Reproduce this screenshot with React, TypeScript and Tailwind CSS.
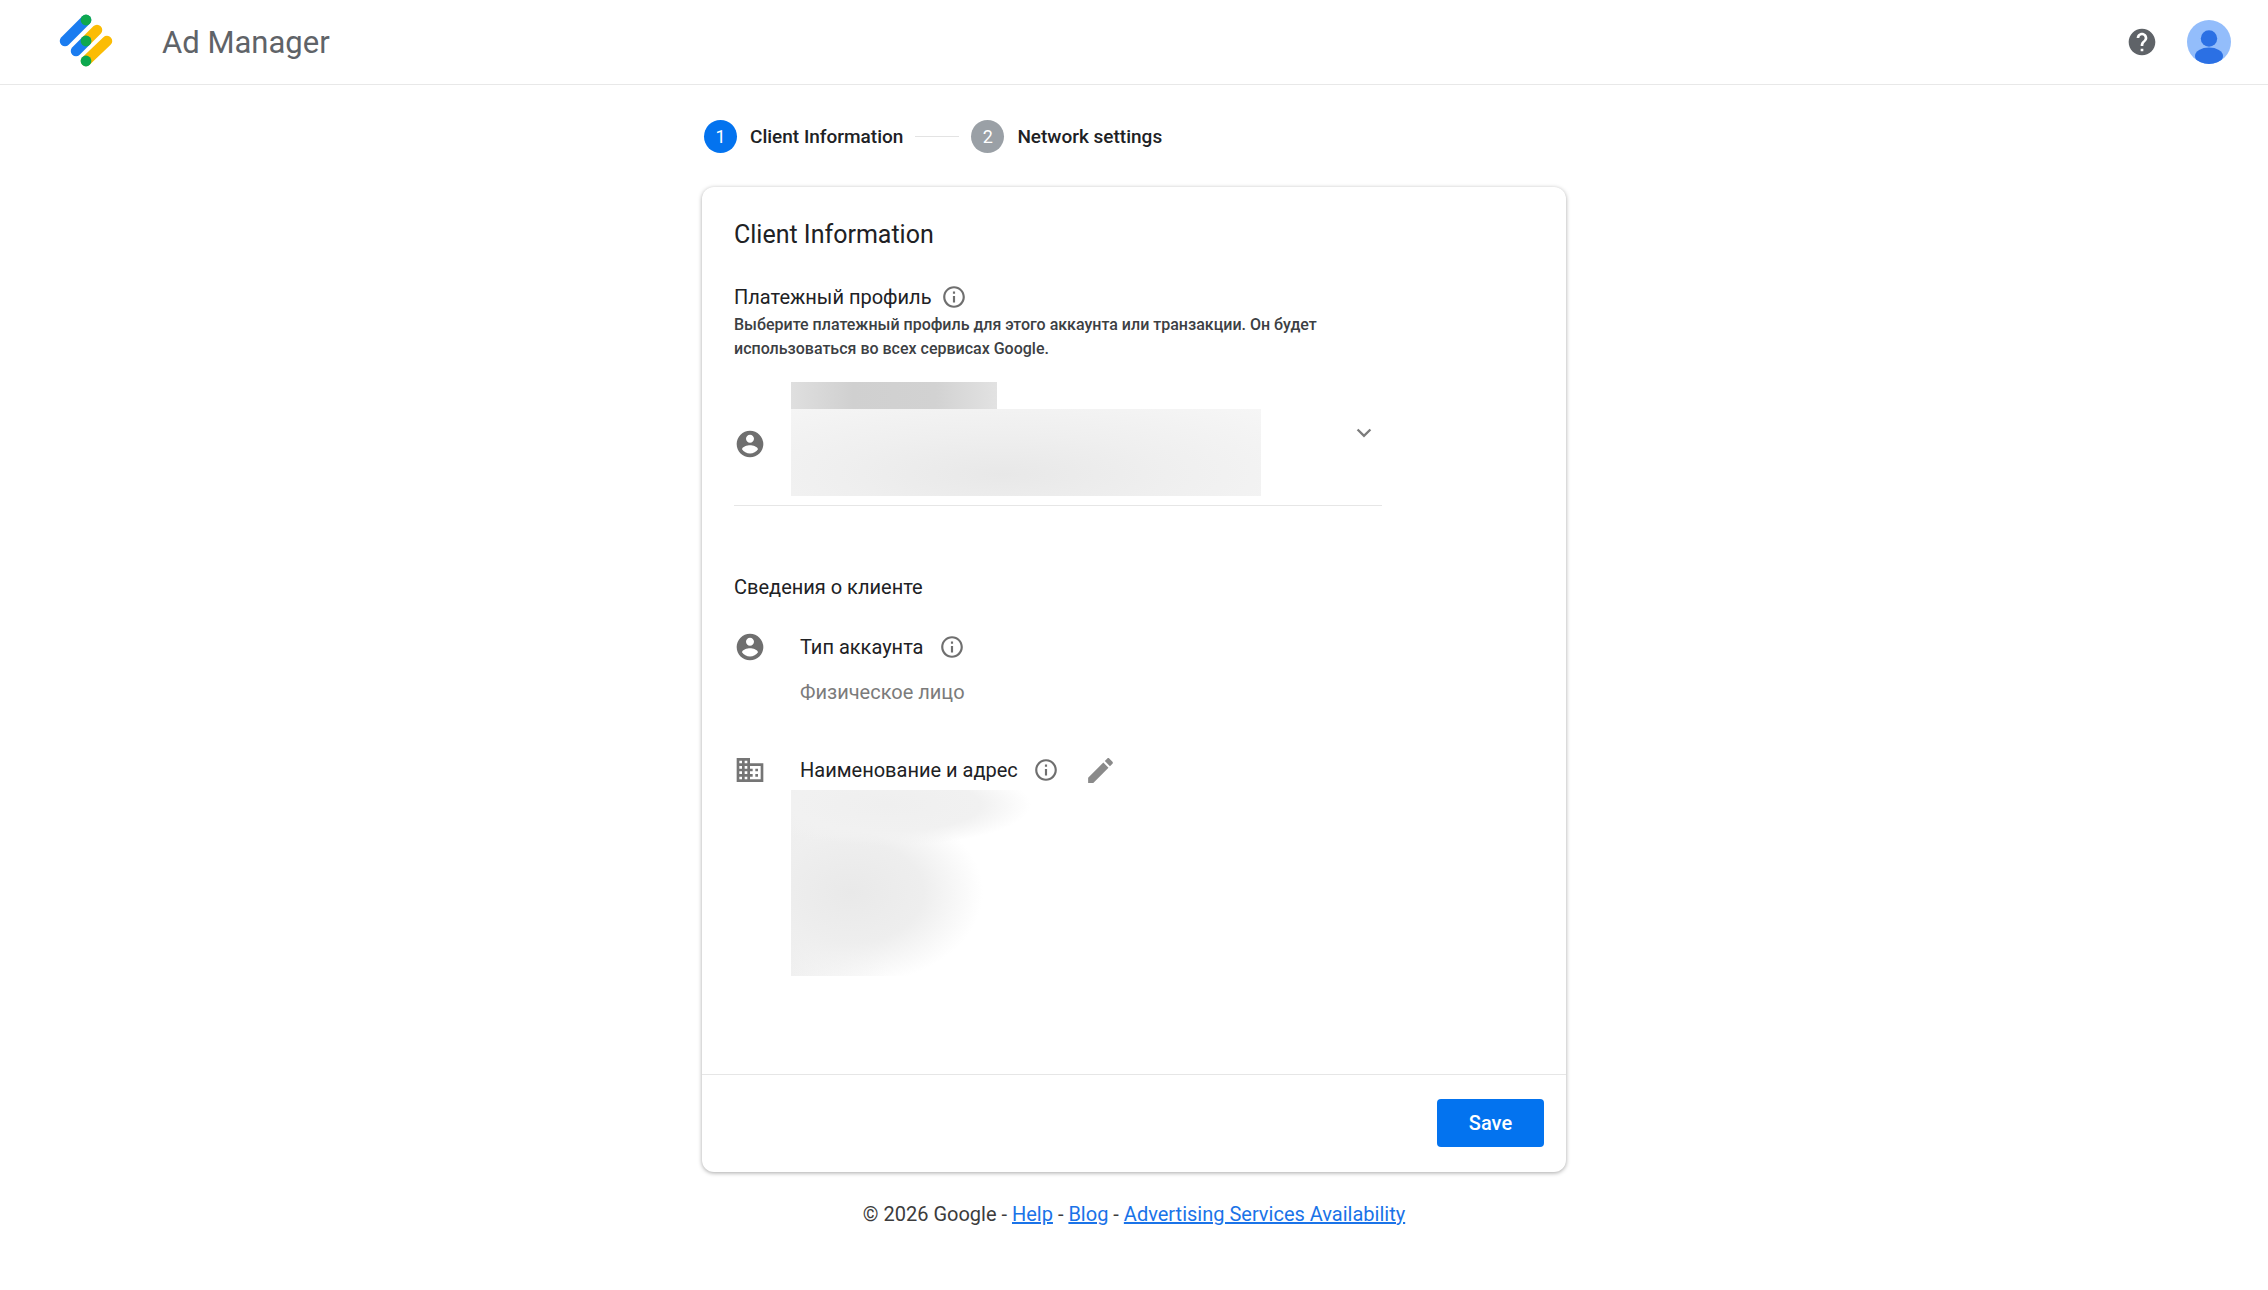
import React from 'react';

const ACCOUNT =
  'M12 2C6.48 2 2 6.48 2 12s4.48 10 10 10 10-4.48 10-10S17.52 2 12 2zm0 3c1.66 0 3 1.34 3 3s-1.34 3-3 3-3-1.34-3-3 1.34-3 3-3zm0 14.2c-2.5 0-4.71-1.28-6-3.22.03-1.99 4-3.08 6-3.08 1.99 0 5.97 1.09 6 3.08-1.29 1.94-3.5 3.22-6 3.22z';
const DOMAIN =
  'M12 7V3H2v18h20V7H12zM6 19H4v-2h2v2zm0-4H4v-2h2v2zm0-4H4V9h2v2zm0-4H4V5h2v2zm4 12H8v-2h2v2zm0-4H8v-2h2v2zm0-4H8V9h2v2zm0-4H8V5h2v2zm10 12h-8v-2h2v-2h-2v-2h2v-2h-2V9h8v10zm-2-8h-2v2h2v-2zm0 4h-2v2h2v-2z';
const EDIT =
  'M3 17.25V21h3.75L17.81 9.94l-3.75-3.75L3 17.25zM20.71 7.04c.39-.39.39-1.02 0-1.41l-2.34-2.34c-.39-.39-1.02-.39-1.41 0l-1.83 1.83 3.75 3.75 1.83-1.83z';
const INFO =
  'M11 7h2v2h-2zm0 4h2v6h-2zm1-9C6.48 2 2 6.48 2 12s4.48 10 10 10 10-4.48 10-10S17.52 2 12 2zm0 18c-4.41 0-8-3.59-8-8s3.59-8 8-8 8 3.59 8 8-3.59 8-8 8z';
const HELP =
  'M12 2C6.48 2 2 6.48 2 12s4.48 10 10 10 10-4.48 10-10S17.52 2 12 2zm1 17h-2v-2h2v2zm2.07-7.75l-.9.92C13.45 12.9 13 13.5 13 15h-2v-.5c0-1.1.45-2.1 1.17-2.83l1.24-1.26c.37-.36.59-.86.59-1.41 0-1.1-.9-2-2-2s-2 .9-2 2H8c0-2.21 1.79-4 4-4s4 1.79 4 4c0 .88-.36 1.68-.93 2.25z';

const Icon: React.FC<{ d: string; className: string }> = ({ d, className }) => (
  <svg viewBox="0 0 24 24" fill="currentColor" className={className}>
    <path d={d} />
  </svg>
);

const InfoIcon = () => <Icon d={INFO} className="h-[26px] w-[26px] text-[#6f6f6f]" />;

const Logo = () => (
  <svg viewBox="0 0 60 60" className="h-[60px] w-[60px]">
    <g fill="none" strokeLinecap="round" strokeWidth="10.5">
      <path d="M7 29 28 8" stroke="#1a7cf0" />
      <path d="M28 29 39 18" stroke="#fbbc04" />
      <path d="M18 39 28 29" stroke="#1a7cf0" />
      <path d="M28 49 49 29" stroke="#fbbc04" />
    </g>
    <circle cx="28" cy="8" r="5.4" fill="#0da84f" />
    <circle cx="28" cy="29" r="5.4" fill="#0da84f" />
    <circle cx="28" cy="49" r="5.4" fill="#0da84f" />
  </svg>
);

const Avatar = () => (
  <svg viewBox="0 0 44 44" className="h-11 w-11">
    <defs>
      <clipPath id="avatar-clip">
        <circle cx="22" cy="22" r="22" />
      </clipPath>
    </defs>
    <circle cx="22" cy="22" r="22" fill="#93bdfb" />
    <g clipPath="url(#avatar-clip)" fill="#2b70e4">
      <circle cx="22" cy="18.5" r="8.2" />
      <ellipse cx="22" cy="36" rx="14" ry="8.5" />
    </g>
  </svg>
);

const Step: React.FC<{ n: number; label: string; circle: string }> = ({ n, label, circle }) => (
  <div className="flex items-center">
    <div className={`flex h-[33px] w-[33px] items-center justify-center rounded-full text-[18px] text-white ${circle}`}>
      {n}
    </div>
    <span className="ml-[13px] text-[19px] font-medium leading-[33px] text-[#202124]">{label}</span>
  </div>
);

export default function App() {
  return (
    <div className="min-h-[1290px] bg-white font-['Roboto',sans-serif] text-[#202124]">
      <header className="flex h-[85px] items-center border-b border-[#e8e8e8] pl-[58px] pr-[37px]">
        <Logo />
        <span className="ml-[44px] text-[31px] leading-none text-[#5f6368]">Ad Manager</span>
        <div className="ml-auto flex items-center gap-[29px]">
          <Icon d={HELP} className="h-8 w-8 text-[#5f6368]" />
          <Avatar />
        </div>
      </header>

      <main className="mx-auto w-[864px]">
        <div className="flex h-[102px] items-start pl-[2px] pt-[35px]">
          <Step n={1} label="Client Information" circle="bg-[#0373ef]" />
          <div className="mx-[12px] mt-[16px] h-px w-[44px] bg-[#e3e3e3]" />
          <Step n={2} label="Network settings" circle="bg-[#9aa0a6]" />
        </div>

        <section className="h-[985px] rounded-[12px] bg-white shadow-[0_1px_4px_rgba(0,0,0,0.35)]">
          <div className="h-[887px] px-8 pt-[30px]">
            <h1 className="text-[25px] leading-[36px] text-[#202124]">Client Information</h1>

            <div className="mt-[28px] flex h-[32px] items-center gap-[9px]">
              <span className="text-[20px] text-[#202124]">Платежный профиль</span>
              <InfoIcon />
            </div>
            <p className="w-[600px] text-[16px] font-medium leading-[24px] text-[#3c4043]">
              Выберите платежный профиль для этого аккаунта или транзакции. Он будет использоваться во всех сервисах
              Google.
            </p>

            <div className="relative mt-[21px] flex h-[124px] w-[648px] items-center border-b border-[#e6e6e6]">
              <Icon d={ACCOUNT} className="h-8 w-8 text-[#6f6f6f]" />
              <div className="ml-[25px] mt-[-9px]">
                <div className="h-[27px] w-[206px] bg-[linear-gradient(90deg,#dfdfdf,#d0d0d0_30%,#d2d2d2_70%,#e2e2e2)]" />
                <div className="h-[87px] w-[470px] bg-[radial-gradient(ellipse_at_45%_75%,#e8e8e8_0%,#efefef_45%,#f6f6f6_100%)]" />
              </div>
              <svg viewBox="0 0 24 24" className="absolute right-[4px] top-[37px] h-7 w-7 text-[#7c7c7c]" fill="none" stroke="currentColor" strokeWidth="2">
                <path d="m6.5 9 5.5 5.5L17.5 9" />
              </svg>
            </div>

            <h2 className="mt-[66px] text-[20px] leading-[30px] text-[#202124]">Сведения о клиенте</h2>

            <div className="mt-[29px] flex h-[32px] items-center">
              <Icon d={ACCOUNT} className="h-8 w-8 text-[#6f6f6f]" />
              <span className="ml-[34px] text-[20px] text-[#202124]">Тип аккаунта</span>
              <span className="ml-[15px]">
                <InfoIcon />
              </span>
            </div>
            <div className="ml-[66px] mt-[14px] text-[20px] leading-[30px] text-[#7b7b7b]">Физическое лицо</div>

            <div className="mt-[47px] flex h-[32px] items-center">
              <Icon d={DOMAIN} className="h-8 w-8 text-[#757575]" />
              <span className="ml-[34px] text-[20px] text-[#202124]">Наименование и адрес</span>
              <span className="ml-[15px]">
                <InfoIcon />
              </span>
              <span className="ml-[25px]">
                <Icon d={EDIT} className="h-[33px] w-[33px] text-[#8a8a8a]" />
              </span>
            </div>
            <div className="ml-[57px] mt-[4px] h-[186px] w-[240px] bg-[radial-gradient(ellipse_60%_22%_at_40%_8%,#efefef_0%,#f1f1f1_65%,rgba(255,255,255,0)_100%),radial-gradient(ellipse_55%_50%_at_25%_55%,#e9e9e9_0%,#eeeeee_55%,rgba(255,255,255,0)_100%),linear-gradient(90deg,#f0f0f0,rgba(255,255,255,0)_40%)]" />
          </div>

          <div className="flex h-[98px] items-start justify-end border-t border-[#e6e6e6] pr-[22px] pt-[24px]">
            <button className="h-[48px] w-[107px] rounded-[4px] bg-[#0373ef] text-[20px] font-medium text-white">Save</button>
          </div>
        </section>

        <footer className="mt-[27px] text-center text-[20px] leading-[30px] text-[#3c3c3c]">
          © 2026 Google - <a className="text-[#1a73e8] underline">Help</a> - <a className="text-[#1a73e8] underline">Blog</a> -{' '}
          <a className="text-[#1a73e8] underline">Advertising Services Availability</a>
        </footer>
      </main>
    </div>
  );
}
